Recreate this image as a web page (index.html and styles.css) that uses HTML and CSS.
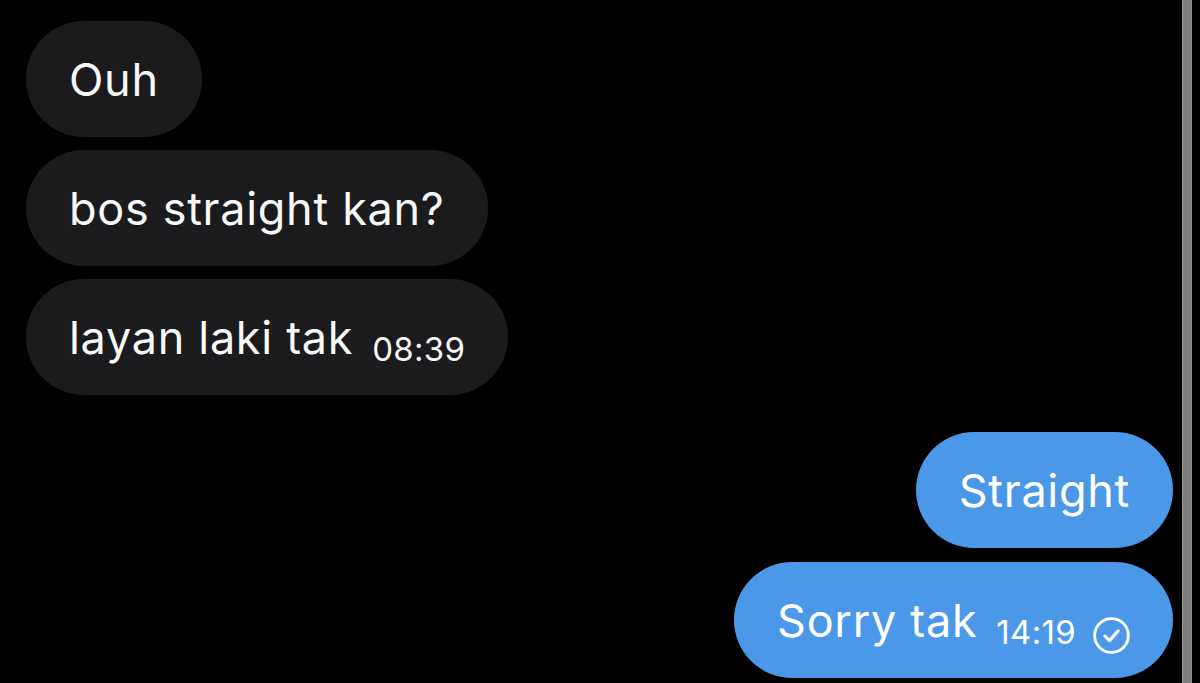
FILE: index.html
```html
<!DOCTYPE html>
<html>
<head>
<meta charset="utf-8">
<link rel="stylesheet" href="styles.css">
</head>
<body>
<div class="screen">
  <div class="chat">
    <div class="bubble in">Ouh</div>
    <div class="bubble in">bos straight kan?</div>
    <div class="bubble in">layan laki tak<span class="time">08:39</span></div>
    <div class="group-out">
      <div class="bubble out">Straight</div>
      <div class="bubble out">Sorry tak<span class="time">14:19</span><svg class="check" width="37" height="37" viewBox="0 0 36 36"><circle cx="18" cy="18" r="16.4" fill="none" stroke="#fff" stroke-width="2.8"/><path d="M11.5 18.5 L16 23 L24.5 13.5" fill="none" stroke="#fff" stroke-width="3" stroke-linecap="round" stroke-linejoin="round"/></svg></div>
    </div>
  </div>
  <div class="scrollbar"></div>
</div>
</body>
</html>
```
FILE: styles.css
```css
html, body {
  margin: 0;
  padding: 0;
  background: #000;
  height: 100%;
  overflow: hidden;
}
.screen {
  display: flex;
  height: 683px;
}
.chat {
  flex: 1;
  display: flex;
  flex-direction: column;
  align-items: flex-start;
  gap: 13px;
  padding: 21px 9px 0 26px;
  font-family: Inter, "Noto Sans", sans-serif;
  color: #f7f7f7;
}
.bubble {
  box-sizing: border-box;
  height: 116px;
  border-radius: 58px;
  padding: 0 43px;
  display: flex;
  align-items: center;
  font-size: 45px;
  letter-spacing: 0.7px;
  white-space: pre;
}
.bubble.in {
  background: #1b1b1d;
}
.group-out {
  align-self: stretch;
  display: flex;
  flex-direction: column;
  align-items: flex-end;
  gap: 14px;
  margin-top: 24px;
}
.bubble.out {
  background: #4a98e7;
  color: #fff;
}
.time {
  font-size: 33px;
  margin-left: 19px;
  position: relative;
  top: 12px;
  letter-spacing: 0.3px;
}
.check {
  margin-left: 17px;
  margin-top: 30px;
}
.scrollbar {
  box-sizing: border-box;
  width: 10px;
  margin-right: 8px;
  background: #7d7d7d;
  border-left: 1px solid #9a9a9a;
  border-right: 1px solid #8f8f8f;
}
```
